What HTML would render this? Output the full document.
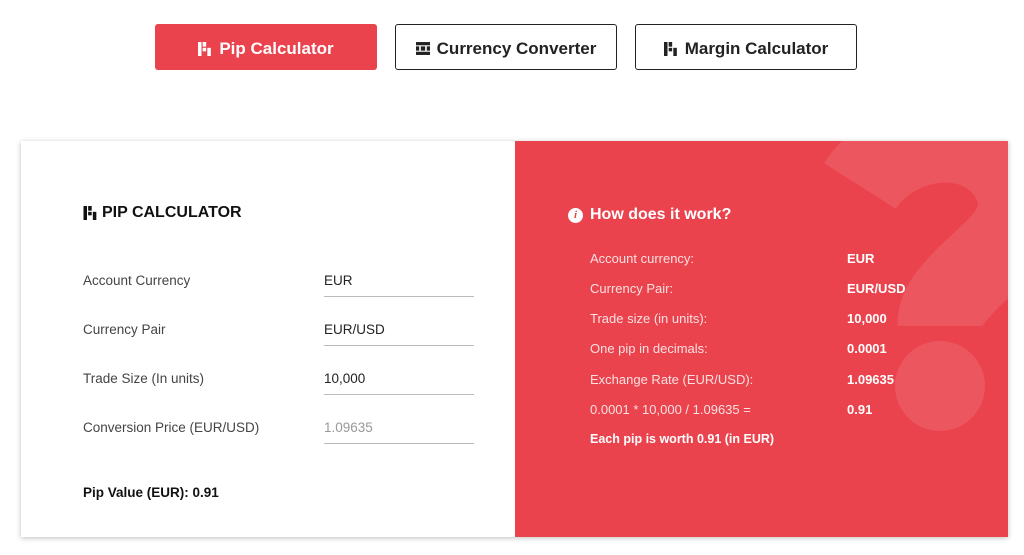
<!DOCTYPE html>
<html><head><meta charset="utf-8"><style>
*{margin:0;padding:0;box-sizing:border-box}
body{width:1024px;height:555px;background:#fff;font-family:"Liberation Sans","DejaVu Sans",sans-serif;position:relative;overflow:hidden;color:#222}
.btn{position:absolute;top:24px;height:46px;border-radius:3px;font-size:17px;font-weight:bold;display:flex;align-items:center;justify-content:center;gap:7px;padding-top:3px}
.b1{left:155px;width:222px;background:#ea434d;color:#fff}
.b2{left:395px;width:222px;border:1px solid #222;color:#222}
.b3{left:635px;width:222px;border:1px solid #222;color:#222}
.card{position:absolute;left:21px;top:141px;width:987px;height:396px;background:#fff;box-shadow:0 1px 5px rgba(0,0,0,.25)}
.red{position:absolute;left:515px;top:141px;width:493px;height:396px;background:#ea434d;overflow:hidden}
.t{position:absolute;font-size:13.5px}
.line{position:absolute;left:324px;width:150px;height:1px;background:#bbb}
.w{position:absolute;color:#fbe0e1;font-size:13px}
.wb{position:absolute;color:#fff;font-size:13px;font-weight:bold}
</style></head><body>
<div class="btn b1"><svg width="14" height="14" viewBox="0 0 12 12" fill="#fff"><rect x="0" y="0" width="3" height="12"/><rect x="4" y="0" width="3" height="4"/><rect x="4" y="5" width="3" height="3"/><rect x="8" y="5" width="3" height="7"/></svg>Pip Calculator</div>
<div class="btn b2"><svg width="14" height="13" viewBox="0 0 13 12" fill="#222"><rect x="0" y="0" width="13" height="3"/><rect x="4.5" y="4" width="4" height="4"/><rect x="0" y="9" width="13" height="3"/><rect x="0" y="4" width="3" height="4"/><rect x="10" y="4" width="3" height="4"/></svg>Currency Converter</div>
<div class="btn b3"><svg width="14" height="14" viewBox="0 0 12 12" fill="#222"><rect x="0" y="0" width="3" height="12"/><rect x="4" y="0" width="3" height="4"/><rect x="4" y="5" width="3" height="3"/><rect x="8" y="5" width="3" height="7"/></svg>Margin Calculator</div>
<div class="card"></div>
<div class="t" style="left:83px;top:204px;font-size:16px;font-weight:bold;color:#111;display:flex;align-items:center;gap:4px"><svg width="15" height="14" viewBox="0 0 12 12" fill="#111"><rect x="0" y="0" width="3" height="12"/><rect x="4" y="0" width="3" height="4"/><rect x="4" y="5" width="3" height="3"/><rect x="8" y="5" width="3" height="7"/></svg>PIP CALCULATOR</div>
<div class="t" style="left:83px;top:273px;color:#444">Account Currency</div>
<div class="t" style="left:324px;top:273px;color:#222">EUR</div><div class="line" style="top:296px"></div>
<div class="t" style="left:83px;top:322px;color:#444">Currency Pair</div>
<div class="t" style="left:324px;top:322px;color:#222">EUR/USD</div><div class="line" style="top:345px"></div>
<div class="t" style="left:83px;top:371px;color:#444">Trade Size (In units)</div>
<div class="t" style="left:324px;top:371px;color:#222">10,000</div><div class="line" style="top:394px"></div>
<div class="t" style="left:83px;top:420px;color:#444">Conversion Price (EUR/USD)</div>
<div class="t" style="left:324px;top:420px;color:#999">1.09635</div><div class="line" style="top:443px"></div>
<div class="t" style="left:83px;top:485px;font-weight:bold;color:#111">Pip Value (EUR): 0.91</div>
<div class="red"><svg width="493" height="396" style="position:absolute;left:0;top:0">
<path d="M345,45 C380,-10 470,-20 500,40 C520,85 480,110 455,135 C430,160 425,170 425,185" fill="none" stroke="rgba(255,255,255,0.1)" stroke-width="85"/>
<circle cx="425" cy="245" r="45" fill="rgba(255,255,255,0.1)"/></svg>
<div class="t" style="left:53px;top:65px;color:#fff;font-size:16px;font-weight:bold;display:flex;align-items:center;gap:7px"><span style="width:15px;height:15px;border-radius:50%;background:#fff;color:#ea434d;font-size:11px;font-style:italic;display:inline-flex;align-items:center;justify-content:center;font-family:'Liberation Serif'">i</span>How does it work?</div>
<div class="w" style="left:75px;top:110px">Account currency:</div><div class="wb" style="left:332px;top:110px">EUR</div>
<div class="w" style="left:75px;top:140px">Currency Pair:</div><div class="wb" style="left:332px;top:140px">EUR/USD</div>
<div class="w" style="left:75px;top:170px">Trade size (in units):</div><div class="wb" style="left:332px;top:170px">10,000</div>
<div class="w" style="left:75px;top:200px">One pip in decimals:</div><div class="wb" style="left:332px;top:200px">0.0001</div>
<div class="w" style="left:75px;top:231px">Exchange Rate (EUR/USD):</div><div class="wb" style="left:332px;top:231px">1.09635</div>
<div class="w" style="left:75px;top:261px">0.0001 * 10,000 / 1.09635 =</div><div class="wb" style="left:332px;top:261px">0.91</div>
<div class="w" style="left:75px;top:291px;color:#fff;font-weight:bold;font-size:12.5px">Each pip is worth 0.91 (in EUR)</div>
</div>
</body></html>
